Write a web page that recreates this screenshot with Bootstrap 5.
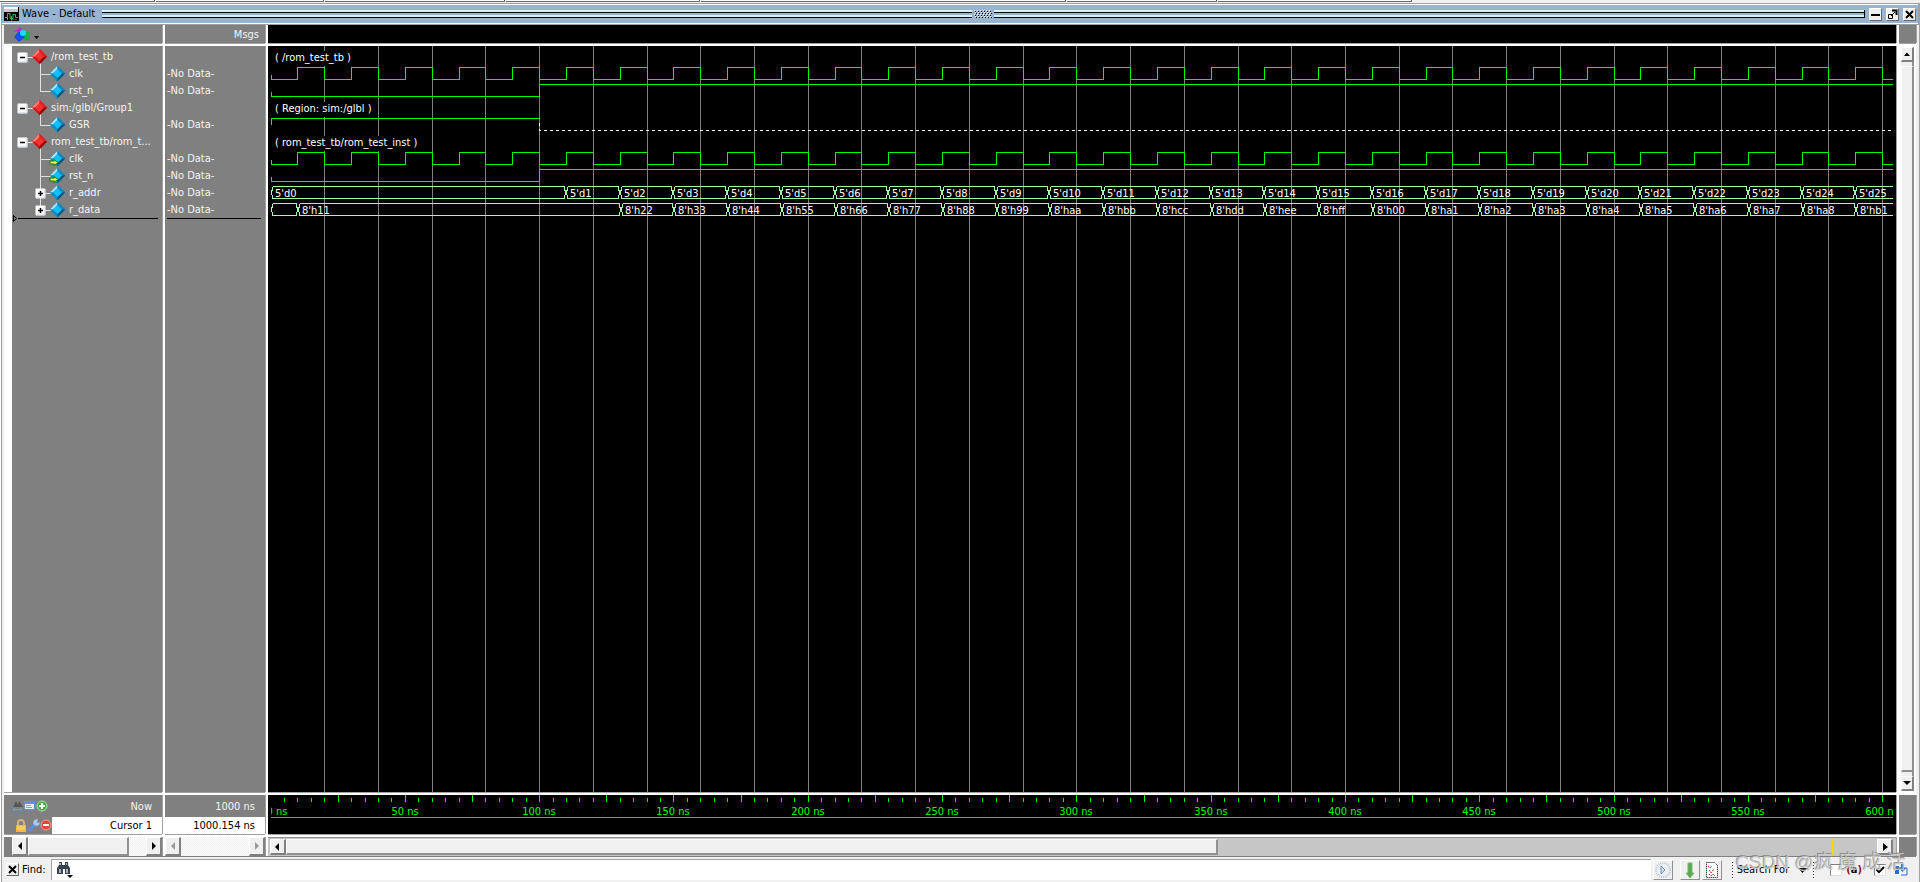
<!DOCTYPE html>
<html lang="en">
<head>
<meta charset="utf-8">
<meta name="viewport" content="width=device-width, initial-scale=1">
<title>Wave - Default</title>
<link href="https://cdn.jsdelivr.net/npm/bootstrap@5.3.0/dist/css/bootstrap.min.css" rel="stylesheet">
<style>
  body { font: 11px/17px "DejaVu Sans Condensed", "DejaVu Sans", "Noto Sans CJK SC", sans-serif; background: #f0f0f0; color: #000; }
  button, input { font: inherit; }
  .wave-app { padding: 0 4px; min-height: 400px; box-shadow: inset 1px 0 #fff, inset 2px 0 #a0a0a0, inset -1px 0 #a0a0a0; }
  .tabs-edge { height: 3px; margin: 0 -4px; background: #f0f0f0; }
  .tabs-edge i { border: solid #696969; border-width: 0 1px 1px 0; height: 2px; margin-right: 1px; background: #fff; }
  .titlebar { height: 20px; margin: 1px -2px; padding: 0 2px; background: #99b4d1; border-top: 1px solid #fff; border-bottom: 1px solid #fff; outline: 1px solid #a0a0a0; }
  .titlebar h1 { font-size: 11px; line-height: 18px; margin: 0 7px 0 3px; }
  .grip { height: 8px; background: linear-gradient(#d8f0ff 0 2px, #000 2px 3px, #99b4d1 3px 5px, #d8f0ff 5px 7px, #000 7px); }
  .grip-end { border-right: 1px solid #000; }
  .tbtn { flex: none; width: 13px; height: 13px; padding: 0; border: 1px solid; border-color: #fff #696969 #696969 #fff; background: #f0f0f0; line-height: 0; }
  .wgrid { display: grid; grid-template-columns: 158px 100px minmax(0, 1fr) 17px; grid-template-rows: 18px minmax(0, 1fr) 39px 19px; gap: 3px; background: #fff; }
  .pane { background: #808080; color: #f4f4f4; overflow: hidden; box-shadow: 0 1px #a0a0a0, 1px 0 #a0a0a0; }
  .pane-wave { background: #000; }
  .tree { border-left: 8px solid #fff; }
  .tree, .vals { padding-top: 2px; }
  .vals ul { padding-left: 2px; }
  .tree li, .vals li { height: 17px; white-space: nowrap; }
  .tree svg { flex: none; margin-right: 1px; }
  .rule { height: 1px; margin: 0 4px 0 2px; background: #000; }
  .marker { margin-top: -4px; height: 9px; }
  .marker .rule { margin-left: 0; }
  .end-pad { padding-right: 10px; }
  .head-pad { padding: 1px 6px 0 0; }
  .cur { background: #fff; color: #000; }
  .foot-row { height: 17px; }
  .foot-row.first { height: 22px; }
  .trough { background: #f0f0f0 conic-gradient(#fff 25%, #eee 0 50%, #fff 0 75%, #eee 0) 0 0/2px 2px; }
  .sbtn { flex: none; width: 16px; padding: 0; border: 1px solid; border-color: #fff #808080 #808080 #fff; border-right-width: 2px; border-bottom-width: 2px; background: #f0f0f0; line-height: 0; }
  .thumb { background: #f0f0f0; border: 1px solid; border-color: #fff #909090 #909090 #fff; border-right-width: 2px; border-bottom-width: 2px; }
  .wave-scroll { padding: 1px 3px 1px 2px; border-top: 1px solid #909090; background: #c6c6c6; }
  .zoomed { background: linear-gradient(#ffd800, #ffd800) calc(100% - 44px) 0/1px 100% no-repeat #c6c6c6; }
  .vbar { background: #efefef; border: solid #fff; border-width: 1px 2px; box-shadow: inset -2px 0 #909090; }
  .vbar .sbtn { width: 13px; height: 15px; }
  .findbar { height: 26px; padding-left: 2px; border-top: 1px solid #808080; background: #f0f0f0; }
  .find-label { margin: 0 5px 0 3px; }
  .findbox { background: #fff; border: solid #a0a0a0; border-width: 1px 0 0 1px; height: 21px; margin-right: 2px; }
  .findbox input { border: 0; outline: 0; background: transparent; min-width: 0; }
  .ibtn { flex: none; width: 20px; height: 20px; margin-right: 2px; padding: 0; border: 1px solid; border-color: #fff #909090 #909090 #fff; background: #f0f0f0; line-height: 0; }
  .ibtn-gap { margin-right: 7px; }
  .dots { width: 1px; height: 16px; background: repeating-linear-gradient(#333 0 1px, transparent 1px 3px); }
  .search-for { font-size: 11px; color: #000; }
  .tick { appearance: none; flex: none; width: 12px; height: 12px; margin: 0; background: #fff; border: 1px solid; border-color: #808080 #e0e0e0 #e0e0e0 #808080; }
  .tick:checked { background: url("data:image/svg+xml,%3Csvg xmlns='http://www.w3.org/2000/svg' viewBox='0 0 10 10'%3E%3Cpath d='M1.5 4.5 4 7l5-5' fill='none' stroke='%23000' stroke-width='2'/%3E%3C/svg%3E") #fff; }
  .brace { color: #901010; }
  .stamp { position: absolute; right: 14px; bottom: 4px; font: 19px/30px "Liberation Sans", "Noto Sans CJK SC", sans-serif; color: rgba(205,205,205,.85); text-shadow: -1px -1px rgba(120,120,120,.7); pointer-events: none; white-space: nowrap; }
  svg { display: block; }
  svg text { font-size: 11px; }
</style>
</head>
<body>
<svg width="0" height="0" class="position-absolute" aria-hidden="true">
  <defs>
    <g id="red" transform="scale(1.1)"><path d="M0-7 7 0 0 7-7 0z" fill="#d01818"/><path d="M0-7V-4L-4 0H-7z" fill="#ff8078"/><path d="M0-7 7 0H4L0-4z" fill="#e02020"/><path d="M0 7 7 0H4L0 4z" fill="#8c0808"/><path d="M0-4 4 0 0 4-4 0z" fill="#f83030"/></g>
    <g id="blue" transform="scale(1.1)"><path d="M0-7 7 0 0 7-7 0z" fill="#0878a8"/><path d="M0-7V-4L-4 0H-7z" fill="#a8e4fc"/><path d="M0-7 7 0H4L0-4z" fill="#1088c0"/><path d="M0 7-7 0H-4L0 4z" fill="#0890c8"/><path d="M0 7 7 0H4L0 4z" fill="#045478"/><path d="M0-4 4 0 0 4-4 0z" fill="#10c0fc"/></g>
    <g id="box"><rect x="-5" y="-5" width="10" height="10" rx="1" fill="#fff"/><path d="M-4 4.500H4.500V-4" fill="none" stroke="#c0c8d8"/><path d="M-2.500 0H2.500" stroke="#000" stroke-width="1.500"/></g>
    <g id="inp"><path d="M-8 2H-4V0L1 4-4 8V6H-8z" fill="#168010"/><path d="M-7 3H-3V2L0 4-3 6V5H-7z" fill="#e8f850"/></g>
  </defs>
</svg>
<div class="wave-app vh-100 d-flex flex-column position-relative">
  <div class="tabs-edge d-flex">
    <i style="width:155px"></i><i style="width:168px"></i><i style="width:180px"></i><i style="width:194px"></i><i style="width:365px"></i><i style="width:150px"></i><i style="width:194px"></i>
  </div>
  <header class="titlebar d-flex align-items-center">
    <svg width="15" height="15"><path fill="#c8c8c8" d="M0 0h14v5H0z"/><path fill="#f8f8f8" d="M0 0h14v2H0z"/><path d="M0 5h15v9H0z"/><path d="M14.500 0v14" stroke="#000"/><path d="M1 10.500h2.500v-4H6v5h3v-4h2.500v3H14M3.500 13V9.500m4 4V9" stroke="#20c060" fill="none"/><path d="M8 12.500h5" stroke="#3030ff"/></svg>
    <h1 class="fw-normal">Wave - Default</h1>
    <div class="grip flex-fill"></div>
    <svg width="22" height="8" id="dots"></svg>
    <div class="grip grip-end flex-fill me-1"></div>
    <button class="tbtn" aria-label="Minimize"><svg width="11" height="11"><path d="M1 5h9v2H1z"/></svg></button>
    <button class="tbtn ms-1" aria-label="Undock"><svg width="11" height="11" fill="none" stroke="#000"><path d="M1.500 5.500h4v4h-4zM4 7l4-4"/><path d="M5 1.500h4.500V6" stroke-width="2"/></svg></button>
    <button class="tbtn ms-1" aria-label="Close"><svg width="11" height="11"><path d="m2 2 7 7m0-7-7 7" stroke="#000" stroke-width="2"/></svg></button>
  </header>

  <main class="wgrid flex-fill">
    <div class="pane d-flex align-items-center">
      <svg class="ms-2" width="30" height="18"><path d="M12 7h6v8h-7z" fill="#18b048"/><path d="M2 7 8 2l5 6-4-2z" fill="#b030d8"/><path d="m7 6 6 6-6 5-5-5z" fill="#1050e8"/><circle cx="11" cy="8" r="3" fill="#10e0ff"/><path d="M22 11h5l-2.500 3z"/></svg>
    </div>
    <div class="pane head-pad text-end">Msgs</div>
    <div class="pane pane-wave"></div>
    <div class="pane"></div>

    <div class="pane tree">
      <ul class="list-unstyled m-0" id="tree"></ul>
      <div class="marker d-flex align-items-center ps-1x">
        <svg width="6" height="9" style="margin-right:0"><path d="M1.500 1.500v6l3-3z" fill="none" stroke="#000"/></svg>
        <div class="rule flex-fill"></div>
      </div>
    </div>
    <div class="pane vals">
      <ul class="list-unstyled m-0" id="vals"></ul>
      <div class="rule"></div>
    </div>
    <div class="pane pane-wave" id="wave"></div>
    <div class="vbar d-flex flex-column">
      <button class="sbtn" aria-label="Scroll up"><svg width="10" height="12"><path d="M2 8h6L5 4.500z"/></svg></button>
      <div class="thumb flex-fill my-1"></div>
      <button class="sbtn" aria-label="Scroll down"><svg width="10" height="12"><path d="M1 4h8L5 8z"/></svg></button>
    </div>

    <div class="pane">
      <div class="foot-row first d-flex align-items-center">
        <svg class="ms-2" width="36" height="16"><path d="m1 9 3-6 2 4 1-4 4 6z" fill="#555"/><path d="M1 11.500h9M3 10l-2 1.500L3 13m5-3 2 1.500L8 13" stroke="#58a0e0" fill="none"/><path d="M12 3h11v9h-3v2l-3-2h-5z" fill="#6890d0"/><path d="M13 6h9v5h-9z" fill="#e8f0ff"/><path d="M14 7.500h5m-5 2h6" stroke="#80a0d8"/><circle cx="30" cy="8" r="5" fill="#48b048" stroke="#b0e0a8"/><path d="M27 8h6m-3-3v6" stroke="#fff" stroke-width="2"/></svg>
        <span class="ms-auto end-pad">Now</span>
      </div>
      <div class="foot-row d-flex">
        <svg class="ms-2" width="40" height="17"><path d="M6 8V6a3 3 0 0 1 6 0V8" fill="none" stroke="#d8b070" stroke-width="2"/><path d="M4 8h10v7H4z" fill="#f0b840"/><path d="M5 10h8m-8 2h8" stroke="#ffe090"/><path d="m18 13 5-6" stroke="#5890e0" stroke-width="3" stroke-linecap="round"/><path d="M21 7l1-4 4-1-1 3 1 1 2-1-1 3-3 1z" fill="#a8c8f0"/><circle cx="34" cy="8" r="5" fill="#e04838" stroke="#f0a098"/><path d="M31 8h6" stroke="#fff" stroke-width="2"/></svg>
        <div class="cur flex-fill text-end end-pad">Cursor 1</div>
      </div>
    </div>
    <div class="pane">
      <div class="foot-row first d-flex align-items-center justify-content-end end-pad">1000 ns</div>
      <div class="foot-row cur text-end end-pad">1000.154 ns</div>
    </div>
    <div class="pane pane-wave" id="ruler"></div>
    <div class="pane"></div>

    <div class="pane d-flex ps-2">
      <button class="sbtn" aria-label="Scroll names left"><svg width="13" height="16"><path d="M9 4v8L5 8z"/></svg></button>
      <div class="trough d-flex flex-fill"><div class="thumb" style="width:86%"></div></div>
      <button class="sbtn" aria-label="Scroll names right"><svg width="13" height="16"><path d="M5 4v8l4-4z"/></svg></button>
    </div>
    <div class="pane d-flex">
      <button class="sbtn" aria-label="Scroll values left"><svg width="13" height="16"><path d="M9 4v8L5 8z" fill="#999"/></svg></button>
      <div class="trough flex-fill"></div>
      <button class="sbtn" aria-label="Scroll values right"><svg width="13" height="16"><path d="M5 4v8l4-4z" fill="#999"/></svg></button>
    </div>
    <div class="pane wave-scroll d-flex">
      <button class="sbtn" aria-label="Scroll wave left"><svg width="13" height="14"><path d="M8 3v8L4 7z"/></svg></button>
      <div class="zoomed d-flex flex-fill"><div class="thumb" style="width:58.600%"></div></div>
      <button class="sbtn" aria-label="Scroll wave right"><svg width="13" height="14"><path d="M5 3v8l5-4z"/></svg></button>
    </div>
    <div class="pane"></div>
  </main>

  <form class="findbar d-flex align-items-center" onsubmit="return false">
    <button type="button" class="tbtn" aria-label="Close find"><svg width="11" height="11"><path d="m2 2 7 7m0-7-7 7" stroke="#000" stroke-width="2"/></svg></button>
    <label for="find" class="find-label">Find:</label>
    <div class="findbox d-flex flex-fill align-items-center">
      <svg class="ms-1" width="18" height="18"><path d="M3 1h3v3h3V1h3v3l2 3v6H9V8H7v5H1V7l2-3z" fill="#38424e"/><path d="M3 8h2v4H3zm7 0h2v4h-2zM3 2h2v2H3zm7 0h1v2h-1z" fill="#a8b4c0"/><path d="M11 14h6l-3 3z"/></svg>
      <input id="find" class="flex-fill" type="text">
    </div>
    <button type="button" class="ibtn ibtn-gap" aria-label="Find next"><svg width="18" height="18" fill="none"><circle cx="9" cy="9" r="7" stroke="#b8c8dc" stroke-width="2" stroke-dasharray="1 1"/><path d="m7 5 4 4-4 4z" stroke="#7090b8" fill="#d0dcec"/></svg></button>
    <button type="button" class="ibtn" aria-label="Search down"><svg width="18" height="18"><path d="M7 2h4v10h2l-4 5-4-5h2z" fill="#58a850" stroke="#78b870"/></svg></button>
    <button type="button" class="ibtn" aria-label="Find all"><svg width="18" height="18" fill="none"><path d="M3.500 1.500h8l3 3v12h-11z" stroke="#000" stroke-dasharray="1 1" fill="#fff"/><path d="m5 5 2 2 2-2m-3 4 2 3 3-4m-5 5 2 2 2-2 2 2" stroke="#e02020" stroke-dasharray="2 1"/></svg></button>
    <span class="dots ms-2 me-1"></span>
    <button type="button" class="btn p-0 border-0 rounded-0 d-flex align-items-center lh-1 search-for">Search For<svg class="ms-2" width="12" height="10"><path d="M1 3h9L5.500 8z"/></svg></button>
    <span class="dots ms-1 me-3"></span>
    <input class="tick" type="checkbox" id="exact" aria-label="Match whole words">
    <label for="exact" class="ms-1 me-2 fw-bold"><span class="brace">(</span>a<span class="brace">)</span></label>
    <input class="tick ms-1" type="checkbox" id="wrap" aria-label="Wrap search" checked>
    <label for="wrap" class="mx-2"><svg width="14" height="14" fill="none"><path d="M1 3h4v8H1z" fill="#2070d8"/><path d="M5 5h8v7H7" stroke="#2070d8"/><path d="M7 1h3v4h2L8.500 9 5 5h2z" fill="#1860d0"/></svg></label>
  </form>
  <div class="stamp">CSDN @疯 魔 成 活</div>
</div>

<script>
const PX_PER_NS = 2.6862, X0 = 3;
const at = ns => Math.floor(X0 + PX_PER_NS * ns) + 0.5;
const rows = [
  ['group', '/rom_test_tb'], ['sig', 'clk'], ['sig', 'rst_n', 'last'],
  ['group', 'sim:/glbl/Group1'], ['sig', 'GSR', 'last'],
  ['group', 'rom_test_tb/rom_t...'], ['in', 'clk'], ['in', 'rst_n'], ['bus', 'r_addr'], ['bus', 'r_data', 'last']
];
const icon = (kind, last) => {
  if (kind === 'group') return '<svg width="38" height="17"><path d="M11 9.500H22M28.500 9V17" stroke="#e0e0e0"/><use href="#box" x="10.500" y="9.500"/><use href="#red" x="27.500" y="8.500"/></svg>';
  let s = `<svg width="56" height="17"><path d="M28.500 0V${last ? 10 : 17}M28 9.500H40" fill="none" stroke="#e0e0e0"/><use href="#blue" x="45.500" y="8.500"/>`;
  if (kind === 'bus') s += '<use href="#box" x="28.500" y="9.500"/><path d="M28.500 7v5" stroke="#000" stroke-width="1.500"/>';
  if (kind === 'in') s += '<use href="#inp" x="45.500" y="8.500"/>';
  return s + '</svg>';
};
tree.innerHTML = rows.map(r => `<li class="d-flex">${icon(r[0], r[2])}<span>${r[1]}</span></li>`).join('');
vals.innerHTML = rows.map(r => `<li>${r[0] === 'group' ? '' : '<span>-No Data-</span>'}</li>`).join('');

let grip = '';
for (let y = 0; y < 4; y++) for (let x = 0; x < 6; x++)
  grip += `<path d="M${2 + x * 3 + (y % 2)} ${y * 2}h1v1h-1z" fill="#fff"/><path d="M${3 + x * 3 + (y % 2)} ${y * 2 + 1}h1v1h-1z"/>`;
dots.innerHTML = grip;

const addr = [[0, "5'd0"]], data = [[0, ''], [10, "8'h11"]];
for (let k = 1; k <= 25; k++) addr.push([90 + 20 * k, "5'd" + k]);
'22 33 44 55 66 77 88 99 aa bb cc dd ee ff 00 a1 a2 a3 a4 a5 a6 a7 a8 b1'.split(' ')
  .forEach((v, i) => data.push([130 + 20 * i, "8'h" + v]));

function draw() {
  const W = wave.clientWidth - 3, end = (W - X0) / PX_PER_NS;
  const yTop = i => 4.5 + 17 * i;
  let s = '';
  for (let t = 20; t < end; t += 20) s += `<path d="M${at(t)} 0V2000" stroke="#808080"/>`;
  const line = (d, c = '#0f0', extra = '') => { s += `<path d="${d}" fill="none" stroke="${c}" ${extra}/>`; };
  const clock = i => {
    const h = yTop(i), l = h + 12; let d = `M${at(0)} ${l - 5}V${l}`;
    for (let t = 10, up = 1; t < end; t += 10, up ^= 1) d += `H${at(t)}V${up ? h : l}`;
    line(d + 'H' + W);
  };
  const reset = i => { const h = yTop(i); line(`M${at(0)} ${h + 7}V${h + 12}H${at(100)}V${h}H${W}`); };
  const label = (i, txt, w) => { s += `<rect x="4" y="${17 * i + 5}" width="${w}" height="15"/><text x="7" y="${17 * i + 15}" fill="#fff">${txt}</text>`; };
  const bus = (i, list, shift) => {
    const h = yTop(i), l = h + 12; let d = '', t = '';
    list.forEach(([ns, v], k) => {
      if (ns > end) return;
      const a = at(ns) + (k ? shift : 0), last = !list[k + 1], b = last ? W : Math.min(W, at(list[k + 1][0]) + shift - 1);
      d += `M${a + 1} ${h}H${last ? b : b - 1}`;
      if (!last) d += `V${h + 3}L${b} ${h + 5}V${h + 8}L${b - 1} ${h + 9}V${l}`; else d += `M${b} ${l}`;
      d += `H${a + 1}V${h + 9}L${a} ${h + 8}V${h + 5}L${a + 1} ${h + 3}V${h}`;
      t += `<text x="${Math.floor(a) + 4}" y="${h + 10.5}" fill="#fff">${v}</text>`;
    });
    line(d, '#a8ffa8'); s += t;
  };
  clock(1); reset(2);
  line(`M${at(0)} ${yTop(4) + 6}V${yTop(4)}H${at(100)}`);
  line(`M${at(100)} ${yTop(4) + 4}v8H${W}`, '#fff', 'stroke-dasharray="3 3"');
  clock(6); reset(7);
  label(0, '( /rom_test_tb )', 82); label(3, '( Region: sim:/glbl )', 98); label(5, '( rom_test_tb/rom_test_inst )', 148);
  bus(8, addr, 0); bus(9, data, 1);
  wave.innerHTML = `<svg width="${W}" height="100%" shape-rendering="crispEdges">${s}</svg>`;

  let r = '';
  for (let t = 5; t < end; t += 5) r += `<path d="M${at(t)} ${t % 25 ? 3 : 0}V7" stroke="#0f0"/>`;
  for (let t = 0; t < end; t += 50) r += `<text x="${t ? at(t) - 0.5 : X0 + 6}" y="20" fill="#0f0" text-anchor="middle">${t} ns</text>`;
  ruler.innerHTML = `<svg width="${W - 3}" height="39" class="mx-auto" viewBox="3 0 ${W - 3} 39" shape-rendering="crispEdges">${r}<path d="M0 22.500H${W}" stroke="#909090"/></svg>`;
}
draw();
addEventListener('resize', draw);
</script>
<script src="https://cdn.jsdelivr.net/npm/bootstrap@5.3.0/dist/js/bootstrap.bundle.min.js"></script>
</body>
</html>
